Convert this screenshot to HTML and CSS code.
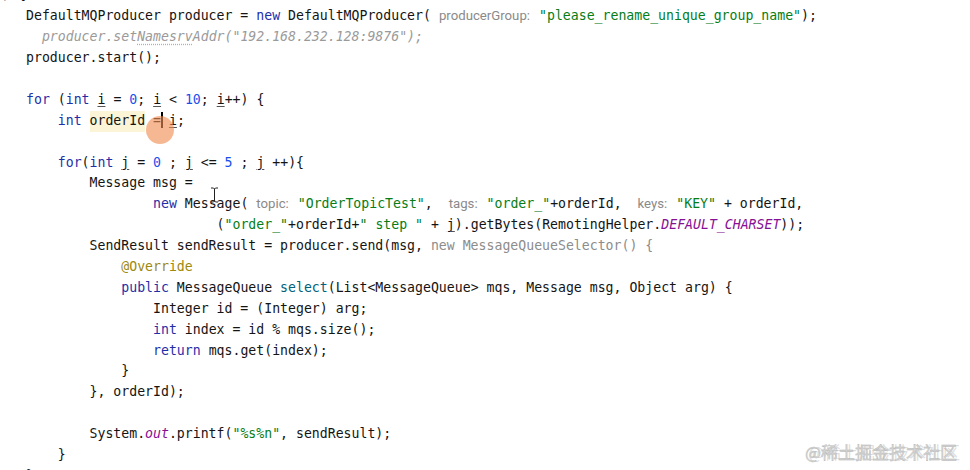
FILE: index.html
```html
<!DOCTYPE html>
<html>
<head>
<meta charset="utf-8">
<link rel="stylesheet" href="styles.css">
</head>
<body>
<div class="editor">
  <div class="code">
    <div class="line cut">) {</div>
    <div class="line">DefaultMQProducer producer = <span class="k">new</span> DefaultMQProducer(<span class="hint">producerGroup:</span><span class="s">"please_rename_unique_group_name"</span>);</div>
    <div class="line">  <span class="gi">producer.set<span class="typo">Namesrv</span>Addr("192.168.232.128:9876");</span></div>
    <div class="line">producer.start();</div>
    <div class="line"> </div>
    <div class="line"><span class="k">for</span> (<span class="k">int</span> <span class="u">i</span> = <span class="n">0</span>; <span class="u">i</span> &lt; <span class="n">10</span>; <span class="u">i</span>++) {</div>
    <div class="line">    <span class="k">int</span> <span class="hl">orderId</span> =<span class="caret"></span> <span class="u">i</span>;</div>
    <div class="line"> </div>
    <div class="line">    <span class="k">for</span>(<span class="k">int</span> <span class="u">j</span> = <span class="n">0</span> ; <span class="u">j</span> &lt;= <span class="n">5</span> ; <span class="u">j</span> ++){</div>
    <div class="line">        Message msg =</div>
    <div class="line">                <span class="k">new</span> Message(<span class="hint">topic:</span><span class="s">"OrderTopicTest"</span>, <span class="hint">tags:</span><span class="s">"order_"</span>+orderId, <span class="hint">keys:</span><span class="s">"KEY"</span> + orderId,</div>
    <div class="line">                        (<span class="s">"order_"</span>+orderId+<span class="s">" step "</span> + <span class="u">j</span>).getBytes(RemotingHelper.<span class="pi">DEFAULT_CHARSET</span>));</div>
    <div class="line">        SendResult sendResult = producer.send(msg, <span class="g">new MessageQueueSelector() {</span></div>
    <div class="line">            <span class="an">@Override</span></div>
    <div class="line">            <span class="k">public</span> MessageQueue <span class="m">select</span>(List&lt;MessageQueue&gt; mqs, Message msg, Object arg) {</div>
    <div class="line">                Integer id = (Integer) arg;</div>
    <div class="line">                <span class="k">int</span> index = id % mqs.size();</div>
    <div class="line">                <span class="k">return</span> mqs.get(index);</div>
    <div class="line">            }</div>
    <div class="line">        }, orderId);</div>
    <div class="line"> </div>
    <div class="line">        System.<span class="pi">out</span>.printf(<span class="s">"%s%n"</span>, sendResult);</div>
    <div class="line">    }</div>
    <div class="line">}</div>
  </div>
  <div class="click"></div>
  <svg class="ibeam" width="9" height="16" viewBox="0 0 9 16"><path d="M1 1h2.5l1 1 1-1H8M4.5 2v12M1 15h2.5l1-1 1 1H8" fill="none" stroke="#222" stroke-width="1"/></svg>
  <div class="watermark">@稀土掘金技术社区</div>
</div>
</body>
</html>
```
FILE: styles.css
```css
html, body {
  margin: 0;
  padding: 0;
  background: #ffffff;
}
.editor {
  position: relative;
  width: 970px;
  height: 470px;
  overflow: hidden;
  background: #ffffff;
}
.code {
  margin-top: -14.6px;
  padding-left: 26px;
  font-family: "DejaVu Sans Mono", "Liberation Mono", monospace;
  font-size: 13.2px;
  color: #141414;
}
.line {
  white-space: pre;
  height: 20.9px;
  line-height: 20.9px;
}
.cut {
  margin-left: -24px;
}
.k { color: #1f2fa8; }
.n { color: #1750eb; }
.s { color: #067d17; }
.g { color: #8c8c8c; }
.gi { color: #9a9a9a; font-style: italic; }
.typo { text-decoration: underline dotted #b0b0b0; text-underline-offset: 3px; }
.pi { color: #871094; font-style: italic; }
.an { color: #9e880d; }
.m { color: #00627a; }
.u { text-decoration: underline; text-decoration-color: #555; text-underline-offset: 2px; text-decoration-thickness: 1px; }
.hl { background: #fbf4d6; display: inline-block; height: 20.9px; }
.hint {
  font-family: Roboto, "Noto Sans", sans-serif;
  font-size: 13.2px;
  color: #8a8a8a;
  margin: 0 9px 0 8px;
}
.caret {
  display: inline-block;
  width: 2px;
  height: 16px;
  margin-right: -2px;
  background: #000;
  vertical-align: -3px;
}
.click {
  position: absolute;
  left: 146px;
  top: 116px;
  width: 28px;
  height: 28px;
  border-radius: 50%;
  background: rgba(240, 140, 80, 0.62);
}
.ibeam {
  position: absolute;
  left: 210px;
  top: 187px;
}
.watermark {
  position: absolute;
  left: 805px;
  top: 442px;
  white-space: nowrap;
  font-family: "Noto Sans CJK SC", sans-serif;
  font-size: 17px;
  line-height: 20px;
  color: #d4d4d4;
  -webkit-text-stroke: 0.3px #b0b0b0;
  text-shadow: 3px 0 0 rgba(190, 190, 190, 0.5);
}
```
